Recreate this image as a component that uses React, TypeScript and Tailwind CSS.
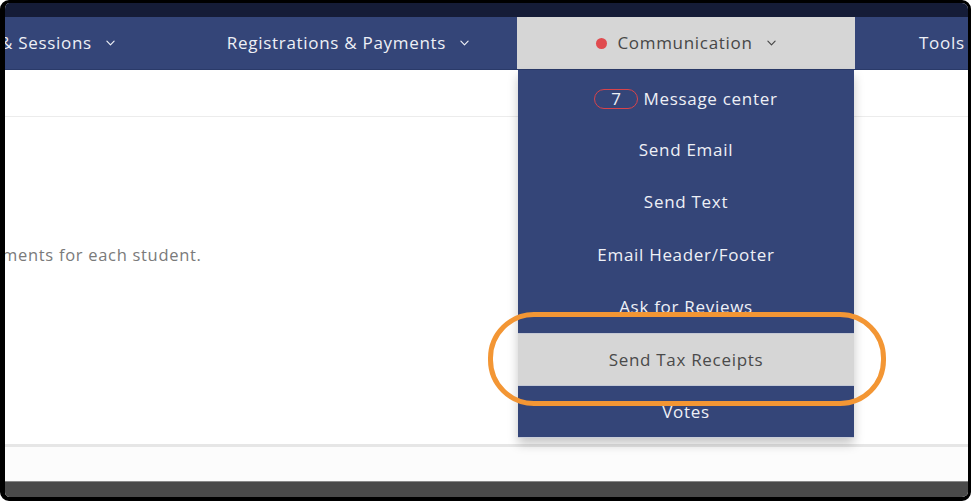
import React from 'react';

const font = { fontFamily: '"Open Sans", "Noto Sans", sans-serif', letterSpacing: '0.7px' };

const Chevron: React.FC<{ className?: string }> = ({ className }) => (
  <svg viewBox="0 0 10 6" className={className} fill="none" stroke="currentColor" strokeWidth="1.3">
    <path d="M1 1l4 4 4-4" strokeLinecap="round" strokeLinejoin="round" />
  </svg>
);

const menuItems = ['Send Email', 'Send Text', 'Email Header/Footer', 'Ask for Reviews'];

const App: React.FC = () => {
  return (
    <div className="w-[972px] h-[501px] bg-white" style={font}>
      <div className="relative w-[971px] h-[501px] rounded-[9px] border-black border-l-[5px] border-r-[3px] border-t-[3px] border-b-[4px] overflow-hidden flex flex-col bg-white">
        {/* top strip */}
        <div className="h-[14px] bg-[#151c37] shrink-0" />

        {/* nav */}
        <nav className="h-[53px] shrink-0 bg-[#344578] flex text-[17px] text-[#eef0f6] border-b border-[#2a3a69]">
          <div className="w-[174px] flex items-center whitespace-nowrap">
            <span className="-ml-[5px]">&amp; Sessions</span>
            <Chevron className="shrink-0 w-[9px] h-[6px] ml-[14px]" />
          </div>
          <div className="w-[338px] flex items-center justify-center whitespace-nowrap">
            <span>Registrations &amp; Payments</span>
            <Chevron className="shrink-0 w-[9px] h-[6px] ml-[14px]" />
          </div>
          <div className="relative w-[338px] flex items-center justify-center whitespace-nowrap bg-[#d6d6d6] text-[#474747]">
            <span className="w-[11px] h-[11px] rounded-full bg-[#e04b4f] mr-[10px]" />
            <span>Communication</span>
            <Chevron className="shrink-0 w-[9px] h-[6px] ml-[14px]" />

            <div className="absolute left-[1px] top-[53px] w-[336px] bg-[#344578] text-[#eef0f6] shadow-[0_6px_10px_rgba(0,0,0,0.22)] z-10">
              <div className="h-[53px] pt-[4px] flex items-center justify-center">
                <span className="w-[44px] h-[20px] rounded-full border-[1.5px] border-[#d9434a] flex items-center justify-center mr-[5px] text-[17px]">7</span>
                <span>Message center</span>
              </div>
              {menuItems.map((m) => (
                <div key={m} className="h-[52.5px] flex items-center justify-center">
                  {m}
                </div>
              ))}
              <div className="h-[53px] flex items-center justify-center bg-[#d6d6d6] text-[#4a4a4a] border-y border-[#c4c8d4]">
                Send Tax Receipts
              </div>
              <div className="h-[52px] flex items-center justify-center border-b border-[#c9cdd8]">Votes</div>
            </div>
          </div>
          <div className="flex-1 flex items-center pl-[64px] whitespace-nowrap">Tools</div>
        </nav>

        {/* sub header */}
        <div className="h-[47px] shrink-0 bg-white border-b border-[#ececec]" />

        {/* main */}
        <main className="flex-1 bg-white flex flex-col">
          <div className="h-[126px] shrink-0" />
          <p className="text-[16.5px] text-[#7a7a7a] whitespace-nowrap -ml-[3px]">
            ments for each student.
          </p>
          <div className="flex-1" />
          <div className="h-[3px] bg-[#e6e6e6] shadow-[0_1px_2px_rgba(0,0,0,0.06)]" />
          <div className="h-[34px] bg-[#fcfcfc]" />
        </main>
        <div className="h-[16px] shrink-0 bg-[#4a4a4a] border-t border-[#888]" />

        {/* annotation */}
        <div className="absolute left-[483px] top-[309px] w-[398px] h-[94px] rounded-[46px] border-[5px] border-[#f39634] z-20 pointer-events-none" />
      </div>
    </div>
  );
};

export default App;
